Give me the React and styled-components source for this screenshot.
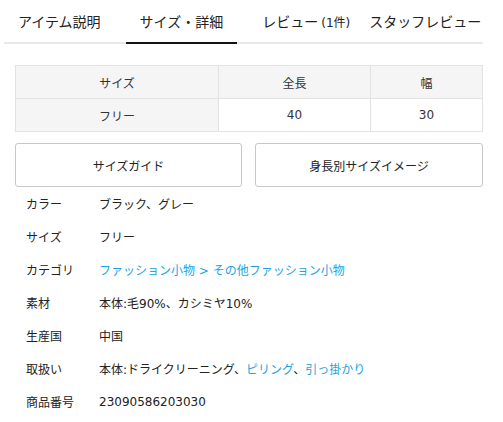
import React from "react";
import styled, { createGlobalStyle } from "styled-components";

const GlobalStyle = createGlobalStyle`
  body {
    margin: 0;
    background: #fff;
    color: #222;
    font-family: "DejaVu Sans", "Noto Sans CJK JP", sans-serif;
  }
`;

const Page = styled.div`
  width: 503px;
  overflow: hidden;
`;

const Tabs = styled.nav`
  display: flex;
  align-items: stretch;
  gap: 11px;
  height: 41px;
  padding-bottom: 1px;
  margin: 0 20px 0 4px;
  border-bottom: 2px solid #e8e8e8;
`;

const Tab = styled.div`
  display: flex;
  align-items: center;
  padding: ${(p) => (p.$last ? "0" : "0 14px")};
  margin-left: ${(p) => (p.$last ? "-6px" : "0")};
  font-size: 14px;
  white-space: nowrap;
  color: #222;
  margin-bottom: -3px;
  border-bottom: 2px solid ${(p) => (p.$active ? "#111" : "transparent")};
  flex-shrink: 0;
`;

const Small = styled.span`
  font-size: 12px;
  margin-left: 3px;
`;

const Body = styled.div`
  margin: 21px 20px 0 15px;
`;

const SizeTable = styled.table`
  width: 100%;
  border-collapse: collapse;
  font-size: 12px;
  color: #333;
`;

const Cell = styled.td`
  height: 32px;
  padding: 0;
  text-align: center;
  border: 1px solid #e2e2e2;
  background: ${(p) => (p.$head ? "#f5f5f5" : "#fff")};
`;

const Buttons = styled.div`
  display: grid;
  grid-template-columns: 227px 1fr;
  gap: 13px;
  margin-top: 11px;
`;

const Button = styled.div`
  height: 42px;
  display: flex;
  align-items: center;
  justify-content: center;
  border: 1px solid #c8c8c8;
  border-radius: 3px;
  font-size: 12px;
  color: #222;
`;

const Specs = styled.dl`
  margin: 0;
  padding: 0 0 0 11px;
`;

const Row = styled.div`
  display: grid;
  grid-template-columns: 73px 1fr;
  align-items: center;
  height: 33px;
  font-size: 12px;
`;

const Label = styled.dt`
  margin: 0;
`;

const Value = styled.dd`
  margin: 0;
  white-space: nowrap;
`;

const Link = styled.span`
  color: #22a3df;
`;

const specs = [
  { label: "カラー", value: "ブラック、グレー" },
  { label: "サイズ", value: "フリー" },
  {
    label: "カテゴリ",
    value: <Link>ファッション小物 &gt; その他ファッション小物</Link>,
  },
  { label: "素材", value: "本体:毛90%、カシミヤ10%" },
  { label: "生産国", value: "中国" },
  {
    label: "取扱い",
    value: (
      <>
        本体:ドライクリーニング、<Link>ピリング</Link>、<Link>引っ掛かり</Link>
      </>
    ),
  },
  { label: "商品番号", value: "23090586203030" },
];

export default function App() {
  return (
    <Page>
      <GlobalStyle />
      <Tabs>
        <Tab>アイテム説明</Tab>
        <Tab $active>サイズ・詳細</Tab>
        <Tab>
          レビュー<Small>(1件)</Small>
        </Tab>
        <Tab $last>スタッフレビュー</Tab>
      </Tabs>
      <Body>
        <SizeTable>
          <colgroup>
            <col style={{ width: "203px" }} />
            <col style={{ width: "152px" }} />
            <col />
          </colgroup>
          <tbody>
            <tr>
              <Cell $head>サイズ</Cell>
              <Cell $head>全長</Cell>
              <Cell $head>幅</Cell>
            </tr>
            <tr>
              <Cell $head>フリー</Cell>
              <Cell>40</Cell>
              <Cell>30</Cell>
            </tr>
          </tbody>
        </SizeTable>
        <Buttons>
          <Button>サイズガイド</Button>
          <Button>身長別サイズイメージ</Button>
        </Buttons>
        <Specs>
          {specs.map((s) => (
            <Row key={s.label}>
              <Label>{s.label}</Label>
              <Value>{s.value}</Value>
            </Row>
          ))}
        </Specs>
      </Body>
    </Page>
  );
}
